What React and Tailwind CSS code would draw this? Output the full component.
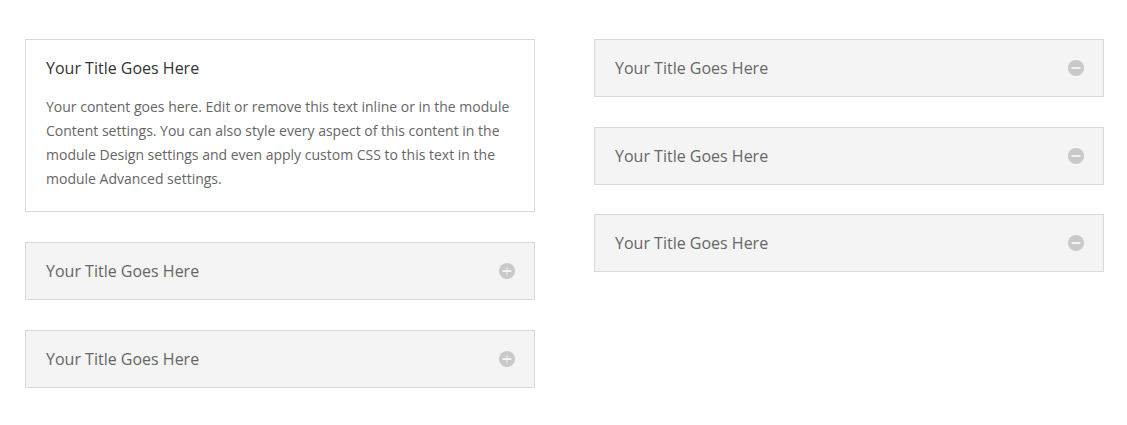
const body =
  "Your content goes here. Edit or remove this text inline or in the module Content settings. You can also style every aspect of this content in the module Design settings and even apply custom CSS to this text in the module Advanced settings.";

const ToggleIcon = ({ plus }) => (
  <svg width="16" height="16" viewBox="0 0 16 16" className="shrink-0">
    <circle cx="8" cy="8" r="8" fill="#c9c9c9" />
    <rect x="3.5" y="7.25" width="9" height="1.5" fill="#fff" />
    {plus && (
      <rect x="7.25" y="3.5" width="1.5" height="9" fill="#fff" opacity="0.45" />
    )}
  </svg>
);

const OpenToggle = () => (
  <div className="border border-[#d9d9d9] bg-white px-5 pt-5 pb-5">
    <h5 className="text-[16px] leading-[16px] text-[#333]">Your Title Goes Here</h5>
    <p className="mt-[19px] text-[14px] leading-[24px] text-[#666]">{body}</p>
  </div>
);

const ClosedToggle = ({ plus, className = "" }) => (
  <div
    className={`flex items-center justify-between border border-[#d9d9d9] bg-[#f4f4f4] py-5 pl-5 pr-[19px] ${className}`}
  >
    <h5 className="text-[16px] leading-[16px] text-[#666]">Your Title Goes Here</h5>
    <ToggleIcon plus={plus} />
  </div>
);

export default function App() {
  return (
    <div
      className="min-h-[425px] bg-white pl-[25px] pt-[39px]"
      style={{ fontFamily: '"Open Sans", Arial, sans-serif' }}
    >
      <div className="flex gap-[59px]">
        <div className="flex w-[510px] flex-col gap-[30px]">
          <OpenToggle />
          <ClosedToggle plus />
          <ClosedToggle plus />
        </div>
        <div className="flex w-[510px] flex-col">
          <ClosedToggle />
          <ClosedToggle className="mt-[30px]" />
          <ClosedToggle className="mt-[29px]" />
        </div>
      </div>
    </div>
  );
}
